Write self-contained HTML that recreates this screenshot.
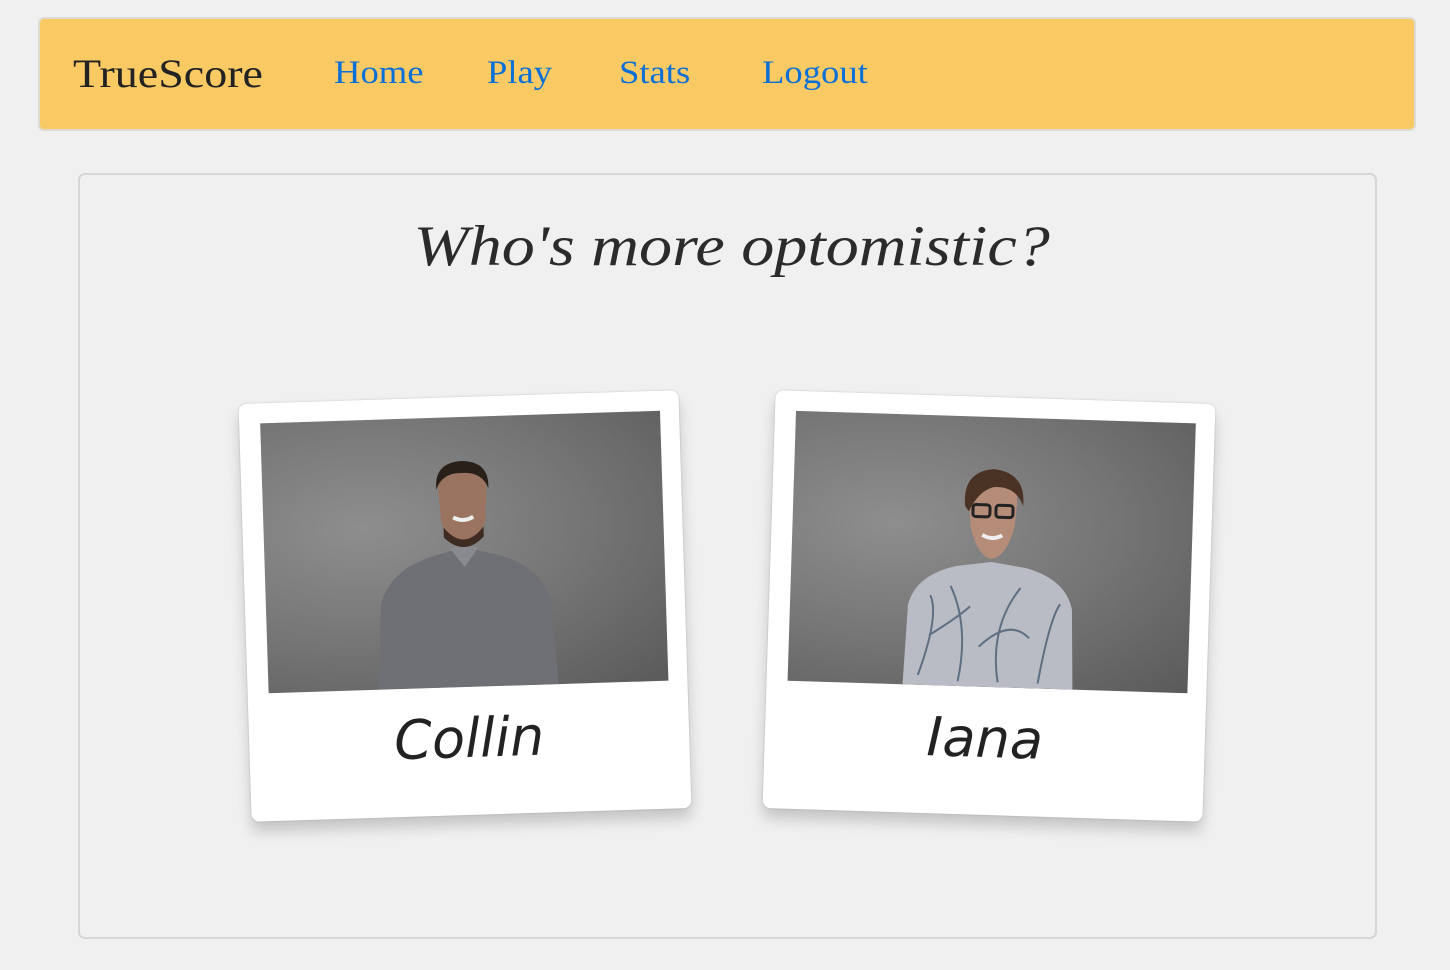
<!DOCTYPE html>
<html><head><meta charset="utf-8"><style>
*{box-sizing:border-box;margin:0;padding:0}
body{width:1450px;height:970px;background:#f0f0f0;font-family:"Liberation Serif",serif;position:relative;overflow:hidden}
.nav{position:absolute;left:38px;top:17px;width:1378px;height:114px;background:#f9ca63;border:2px solid #dedbd0;border-radius:6px}
.brand{position:absolute;left:33px;top:31px;font-size:40px;color:#222;transform:scaleX(1.15);transform-origin:left}
.nav a{position:absolute;top:36px;font-size:33px;color:#0a6fd6;text-decoration:none;transform:scaleX(1.11);transform-origin:left}
.box{position:absolute;left:78px;top:173px;width:1299px;height:766px;border:2px solid #d6d6d6;border-radius:7px}
h1{position:absolute;left:8px;width:1450px;top:214px;text-align:center;font-style:italic;font-weight:normal;font-size:57px;color:#2b2b2b;transform:scaleX(1.16);transform-origin:733px 0}
.card{position:absolute;width:440px;height:418px;background:#fff;border-radius:8px;box-shadow:0 10px 14px rgba(0,0,0,.18),0 0 2px rgba(0,0,0,.2)}
.photo{position:absolute;left:21px;top:20px;width:400px;height:270px;overflow:hidden;background:radial-gradient(ellipse at 25% 40%,#8e8e8e,#767676 50%,#5a5a5a 100%)}
.cap{position:absolute;left:0;width:100%;top:310px;text-align:center;font-family:"Comic Sans MS","DejaVu Sans",sans-serif;font-style:italic;font-size:54px;color:#222}
</style></head><body>
<div class="nav">
<div class="brand">TrueScore</div>
<a style="left:294px">Home</a><a style="left:447px">Play</a><a style="left:579px">Stats</a><a style="left:722px">Logout</a>
</div>
<div class="box"></div>
<h1>Who's more optomistic?</h1>

<div class="card" style="left:245px;top:397px;transform:rotate(-1.8deg)">
<div class="photo">
<svg width="400" height="270">
<path d="M110 270 L115 185 Q125 150 170 138 L200 130 L230 138 Q275 150 285 185 L290 270Z" fill="#6e7076"/>
<path d="M185 130 L200 150 L215 130Z" fill="#888a90"/>
<path d="M176 75 Q174 50 200 47 Q226 50 224 75 L222 105 Q214 128 200 130 Q186 128 178 105Z" fill="#9a7460"/>
<path d="M180 110 Q200 135 220 110 L220 120 Q200 140 180 120Z" fill="#3e2c22"/>
<path d="M174 72 Q172 45 200 44 Q228 45 226 72 Q220 55 200 56 Q180 55 174 72Z" fill="#2a201a"/>
<path d="M190 100 Q200 106 210 100" stroke="#eee" stroke-width="4" fill="none"/>
</svg>
</div>
<div class="cap">Collin</div>
</div>

<div class="card" style="left:769px;top:397px;transform:rotate(1.8deg)">
<div class="photo">
<svg width="400" height="270">
<path d="M115 270 L118 190 Q125 160 165 150 L200 145 L235 150 Q275 160 282 190 L285 270Z" fill="#b9bcc4"/>
<g stroke="#4a5a70" stroke-width="2" fill="none" opacity=".8">
<path d="M130 260 Q150 200 140 180 M170 265 Q180 210 160 170 M210 265 Q200 210 230 170 M250 265 Q260 200 270 185 M190 230 Q220 200 240 220 M140 220 Q170 200 180 190"/>
</g>
<path d="M176 85 Q176 60 200 58 Q224 60 224 85 L222 110 Q214 140 200 142 Q186 140 178 110Z" fill="#b58c78"/>
<path d="M172 90 Q168 55 200 52 Q232 55 230 88 Q222 68 200 70 Q185 74 176 95Z" fill="#4a3325"/>
<rect x="180" y="88" width="17" height="12" rx="3" fill="none" stroke="#222" stroke-width="3"/>
<rect x="203" y="88" width="17" height="12" rx="3" fill="none" stroke="#222" stroke-width="3"/>
<path d="M190 118 Q200 124 210 118" stroke="#eee" stroke-width="4" fill="none"/>
</svg>
</div>
<div class="cap">Iana</div>
</div>
</body></html>
